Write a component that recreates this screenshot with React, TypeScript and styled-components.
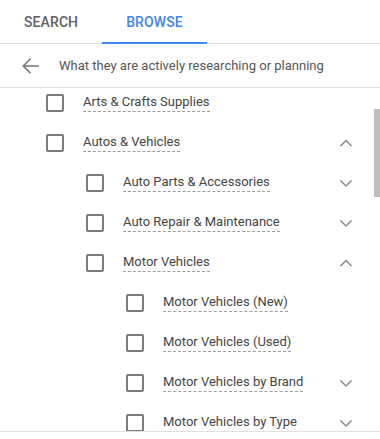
import { FC } from "react";
import styled, { createGlobalStyle } from "styled-components";

const GlobalStyle = createGlobalStyle`
  body {
    margin: 0;
    background: #fff;
    font-family: Roboto, "Liberation Sans", Arial, sans-serif;
  }
`;

const Panel = styled.div`
  width: 380px;
  height: 432px;
  display: flex;
  flex-direction: column;
  background: #fff;
  border-bottom: 1px solid #e0e0e0;
  box-sizing: border-box;
`;

const TabBar = styled.div`
  display: flex;
  height: 44px;
  flex-shrink: 0;
  box-sizing: border-box;
  border-bottom: 1px solid #e0e0e0;
`;

const Tab = styled.div<{ $active?: boolean }>`
  height: 44px;
  margin-bottom: -1px;
  box-sizing: border-box;
  padding: 1px 24px 0;
  display: flex;
  align-items: center;
  font-size: 14px;
  font-weight: 500;
  letter-spacing: 0.1px;
  color: ${(p) => (p.$active ? "#4285f4" : "#616161")};
  border-bottom: 2px solid ${(p) => (p.$active ? "#4285f4" : "transparent")};
  cursor: pointer;
`;

const BackRow = styled.div`
  display: flex;
  align-items: center;
  height: 44px;
  flex-shrink: 0;
  box-sizing: border-box;
  border-bottom: 1px solid #e0e0e0;
  padding-left: 19px;
`;

const BackText = styled.span`
  margin-left: 16px;
  font-size: 13px;
  color: #555;
`;

const ListArea = styled.div`
  position: relative;
  flex: 1;
  overflow: hidden;
`;

const ListInner = styled.div`
  margin-top: -5px;
`;

const Row = styled.div<{ $level: number }>`
  display: flex;
  align-items: center;
  height: 40px;
  padding-left: ${(p) => 46 + p.$level * 40}px;
  padding-right: 22px;
`;

const Checkbox = styled.span`
  width: 18px;
  height: 18px;
  box-sizing: border-box;
  border: 2px solid #7a7a7a;
  border-radius: 2px;
  flex-shrink: 0;
`;

const Label = styled.span`
  margin-left: 19px;
  font-size: 13px;
  line-height: 16px;
  padding-bottom: 1px;
  color: #444;
  border-bottom: 1px dashed #9e9e9e;
`;

const Chevron = styled.span`
  margin-left: auto;
  width: 24px;
  height: 24px;
  display: flex;
  color: #8a8a8a;
`;

const Thumb = styled.div`
  position: absolute;
  right: 0;
  top: 21px;
  width: 6px;
  height: 88px;
  background: #bdbdbd;
`;

const BackArrow = () => (
  <svg width="24" height="24" viewBox="0 0 24 24" fill="none">
    <path d="M20 12H4.5M11.5 4.8L4.3 12l7.2 7.2" stroke="#757575" strokeWidth="1.6" />
  </svg>
);

const ChevronIcon: FC<{ up?: boolean }> = ({ up }) => (
  <svg width="24" height="24" viewBox="0 0 24 24" fill="none">
    <path
      d={up ? "M6.5 15l5.5-5.5 5.5 5.5" : "M6.5 9.5l5.5 5.5 5.5-5.5"}
      stroke="currentColor"
      strokeWidth="1.5"
    />
  </svg>
);

type Item = { label: string; level: number; toggle?: "up" | "down" };

const items: Item[] = [
  { label: "Arts & Crafts Supplies", level: 0 },
  { label: "Autos & Vehicles", level: 0, toggle: "up" },
  { label: "Auto Parts & Accessories", level: 1, toggle: "down" },
  { label: "Auto Repair & Maintenance", level: 1, toggle: "down" },
  { label: "Motor Vehicles", level: 1, toggle: "up" },
  { label: "Motor Vehicles (New)", level: 2 },
  { label: "Motor Vehicles (Used)", level: 2 },
  { label: "Motor Vehicles by Brand", level: 2, toggle: "down" },
  { label: "Motor Vehicles by Type", level: 2, toggle: "down" },
];

export default function App() {
  return (
    <>
      <GlobalStyle />
      <Panel>
        <TabBar>
          <Tab>SEARCH</Tab>
          <Tab $active>BROWSE</Tab>
        </TabBar>
        <BackRow>
          <BackArrow />
          <BackText>What they are actively researching or planning</BackText>
        </BackRow>
        <ListArea>
          <ListInner>
            {items.map((it) => (
              <Row key={it.label} $level={it.level}>
                <Checkbox />
                <Label>{it.label}</Label>
                {it.toggle && (
                  <Chevron>
                    <ChevronIcon up={it.toggle === "up"} />
                  </Chevron>
                )}
              </Row>
            ))}
          </ListInner>
          <Thumb />
        </ListArea>
      </Panel>
    </>
  );
}
